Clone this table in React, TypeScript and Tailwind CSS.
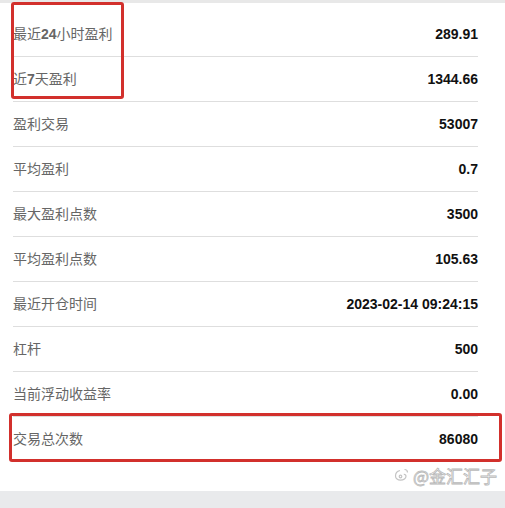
import React from 'react';

type Row = { label: React.ReactNode; value: string };

const rows: Row[] = [
  { label: <>最近<b className="font-bold">24</b>小时盈利</>, value: '289.91' },
  { label: <>近<b className="font-bold">7</b>天盈利</>, value: '1344.66' },
  { label: '盈利交易', value: '53007' },
  { label: '平均盈利', value: '0.7' },
  { label: '最大盈利点数', value: '3500' },
  { label: '平均盈利点数', value: '105.63' },
  { label: '最近开仓时间', value: '2023-02-14 09:24:15' },
  { label: '杠杆', value: '500' },
  { label: '当前浮动收益率', value: '0.00' },
  { label: '交易总次数', value: '86080' },
];

const App: React.FC = () => {
  return (
    <div className="relative w-[505px] h-[508px] bg-white overflow-hidden flex flex-col font-['Liberation_Sans','Noto_Sans_CJK_SC',sans-serif]">
      <div className="h-[3px] bg-[#e8e8e8]" />

      {/* 统计列表 */}
      <div className="ml-[13px] mr-[27px] pt-[9px]">
        {rows.map((r, i) => (
          <div
            key={i}
            className={`h-[45px] flex items-center justify-between ${i < rows.length - 1 ? 'border-b border-[#dedede]' : ''}`}
          >
            <span className="text-[14px] text-[#666]">{r.label}</span>
            <span className="text-[14px] font-bold text-[#111]">{r.value}</span>
          </div>
        ))}
      </div>

      {/* 水印 */}
      <div className="flex items-center justify-end pr-[8px] mt-[-3px] h-[32px] gap-[3px]">
        <svg width="16" height="16" viewBox="0 0 16 16" fill="none" stroke="#c4c4c4" strokeWidth="1.2">
          <path d="M6 3.5c-2.5.6-4.5 3-4.5 5.5 0 2.6 2.3 4.2 5 4.2 3.2 0 5.5-2 5.5-4 0-1.4-1.2-2-2.2-1.8" />
          <path d="M10.5 2.5a3 3 0 0 1 3 3" />
          <circle cx="6.5" cy="9.5" r="1.3" />
        </svg>
        <span className="text-[17px] text-white [-webkit-text-stroke:0.8px_#b8b8b8] font-['Noto_Sans_CJK_SC',sans-serif] leading-none">
          @金汇汇子
        </span>
      </div>

      <div className="flex-1 bg-[#e9eaec]" />

      {/* 红色标注框 */}
      <div className="absolute left-[11px] top-[2px] w-[113px] h-[97px] border-[3px] border-[#d2302c] rounded-[3px]" />
      <div className="absolute left-[9px] top-[413px] w-[493px] h-[49px] border-[3px] border-[#d2302c] rounded-[3px]" />
    </div>
  );
};

export default App;
